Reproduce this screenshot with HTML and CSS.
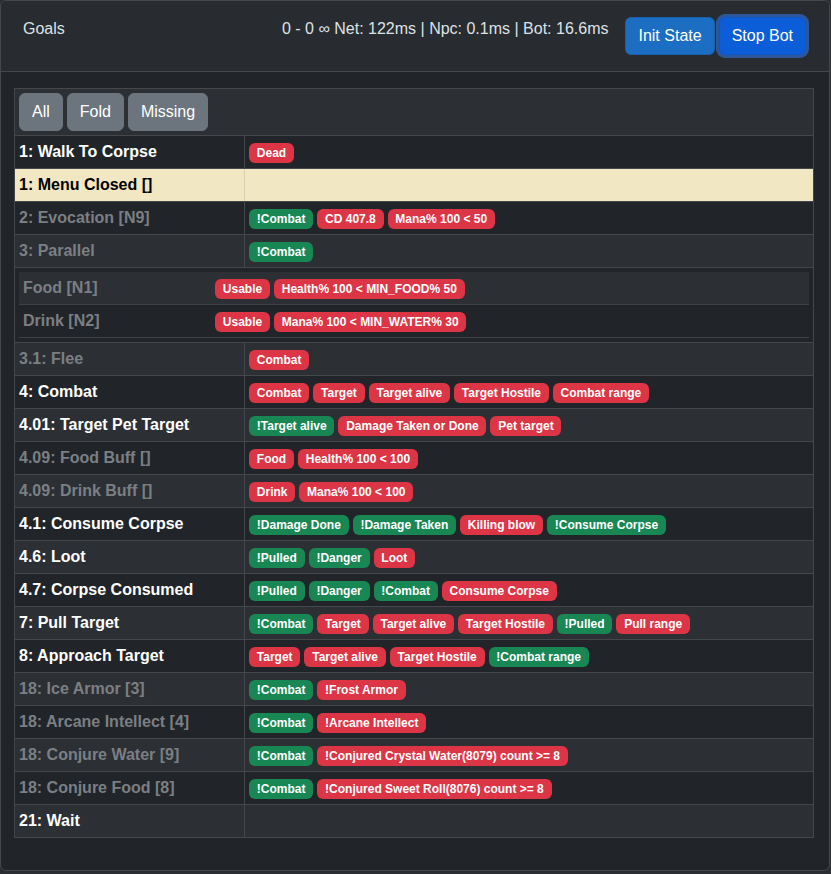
FILE: index.html
```html
<!DOCTYPE html>
<html>
<head>
<meta charset="utf-8">
<title>Goals</title>
<link rel="stylesheet" href="styles.css">
</head>
<body>
<div class="card">
  <div class="card-header">
    <div class="title">Goals</div>
    <div class="header-right">
      <span class="stats">0 - 0 ∞ Net: 122ms | Npc: 0.1ms | Bot: 16.6ms</span>
      <button class="btn btn-init">Init State</button>
      <button class="btn btn-stop">Stop Bot</button>
    </div>
  </div>
  <div class="card-body">
    <table class="goals">
      <colgroup><col class="col-name"><col></colgroup>
      <tbody>
        <tr><td colspan="2"><div class="filters"><button class="btn btn-sec">All</button><button class="btn btn-sec">Fold</button><button class="btn btn-sec">Missing</button></div></td></tr>
        <tr><td class="name">1: Walk To Corpse</td><td><span class="badge red">Dead</span></td></tr>
        <tr class="warn"><td class="name">1: Menu Closed []</td><td></td></tr>
        <tr><td class="name muted">2: Evocation [N9]</td><td><span class="badge green">!Combat</span><span class="badge red">CD 407.8</span><span class="badge red">Mana% 100 &lt; 50</span></td></tr>
        <tr><td class="name muted">3: Parallel</td><td><span class="badge green">!Combat</span></td></tr>
        <tr><td colspan="2">
          <table class="nested">
            <colgroup><col class="col-sub"><col></colgroup>
            <tbody>
              <tr><td class="name muted">Food [N1]</td><td><span class="badge red">Usable</span><span class="badge red">Health% 100 &lt; MIN_FOOD% 50</span></td></tr>
              <tr><td class="name muted">Drink [N2]</td><td><span class="badge red">Usable</span><span class="badge red">Mana% 100 &lt; MIN_WATER% 30</span></td></tr>
            </tbody>
          </table>
        </td></tr>
        <tr><td class="name muted">3.1: Flee</td><td><span class="badge red">Combat</span></td></tr>
        <tr><td class="name">4: Combat</td><td><span class="badge red">Combat</span><span class="badge red">Target</span><span class="badge red">Target alive</span><span class="badge red">Target Hostile</span><span class="badge red">Combat range</span></td></tr>
        <tr><td class="name">4.01: Target Pet Target</td><td><span class="badge green">!Target alive</span><span class="badge red">Damage Taken or Done</span><span class="badge red">Pet target</span></td></tr>
        <tr><td class="name muted">4.09: Food Buff []</td><td><span class="badge red">Food</span><span class="badge red">Health% 100 &lt; 100</span></td></tr>
        <tr><td class="name muted">4.09: Drink Buff []</td><td><span class="badge red">Drink</span><span class="badge red">Mana% 100 &lt; 100</span></td></tr>
        <tr><td class="name">4.1: Consume Corpse</td><td><span class="badge green">!Damage Done</span><span class="badge green">!Damage Taken</span><span class="badge red">Killing blow</span><span class="badge green">!Consume Corpse</span></td></tr>
        <tr><td class="name">4.6: Loot</td><td><span class="badge green">!Pulled</span><span class="badge green">!Danger</span><span class="badge red">Loot</span></td></tr>
        <tr><td class="name">4.7: Corpse Consumed</td><td><span class="badge green">!Pulled</span><span class="badge green">!Danger</span><span class="badge green">!Combat</span><span class="badge red">Consume Corpse</span></td></tr>
        <tr><td class="name">7: Pull Target</td><td><span class="badge green">!Combat</span><span class="badge red">Target</span><span class="badge red">Target alive</span><span class="badge red">Target Hostile</span><span class="badge green">!Pulled</span><span class="badge red">Pull range</span></td></tr>
        <tr><td class="name">8: Approach Target</td><td><span class="badge red">Target</span><span class="badge red">Target alive</span><span class="badge red">Target Hostile</span><span class="badge green">!Combat range</span></td></tr>
        <tr><td class="name muted">18: Ice Armor [3]</td><td><span class="badge green">!Combat</span><span class="badge red">!Frost Armor</span></td></tr>
        <tr><td class="name muted">18: Arcane Intellect [4]</td><td><span class="badge green">!Combat</span><span class="badge red">!Arcane Intellect</span></td></tr>
        <tr><td class="name muted">18: Conjure Water [9]</td><td><span class="badge green">!Combat</span><span class="badge red">!Conjured Crystal Water(8079) count &gt;= 8</span></td></tr>
        <tr><td class="name muted">18: Conjure Food [8]</td><td><span class="badge green">!Combat</span><span class="badge red">!Conjured Sweet Roll(8076) count &gt;= 8</span></td></tr>
        <tr><td class="name">21: Wait</td><td></td></tr>
      </tbody>
    </table>
  </div>
</div>
</body>
</html>
```
FILE: styles.css
```css
* { box-sizing: border-box; }
html, body { margin: 0; padding: 0; }
body {
  background: #2b2e32;
  color: #dee2e6;
  font-family: "Liberation Sans", Arial, sans-serif;
  font-size: 16px;
  line-height: 1.5;
}
.card {
  width: 830px;
  background: #212529;
  border: 1px solid #44474c;
  border-radius: 6px;
}
.card-header {
  display: flex;
  justify-content: space-between;
  align-items: flex-start;
  padding: 16px 23px 16px 22px;
  background: #282b30;
  border-bottom: 1px solid #44474c;
  border-radius: 6px 6px 0 0;
}
.header-right { display: flex; align-items: flex-start; }
.stats { margin-right: 17px; }
.btn {
  font-family: inherit;
  font-size: 16px;
  line-height: 24px;
  padding: 6px 12px;
  border: 1px solid transparent;
  border-radius: 6px;
  color: #fff;
  cursor: pointer;
}
.btn-init { background: #1b6ec2; border-color: #1861ac; margin-right: 4px; }
.btn-stop { background: #0b5ed7; border-color: #0a58ca; box-shadow: 0 0 0 3px rgba(49,132,253,.5); }
.btn-sec { background: #6c757d; border-color: #6c757d; }
.card-body { padding: 16px 15px 16px 13px; }
.filters { display: flex; gap: 4px; }
table { border-collapse: collapse; width: 100%; table-layout: fixed; }
.goals { margin-bottom: 16px; }
.goals > colgroup > .col-name { width: 230px; }
.goals > tbody > tr > td {
  border: 1px solid #44484d;
  padding: 4px;
  vertical-align: top;
  background: #212529;
}
.goals > tbody > tr:nth-child(odd) > td { background: #2c3034; }
.goals > tbody > tr.warn > td { background: #f2e7c3; color: #000; border-color: #d8cfb2; border-top-color: #44484d; border-bottom-color: #44484d; }
.goals > tbody > tr.warn > td:first-child { border-left-color: #44484d; }
.goals > tbody > tr.warn > td:last-child { border-right-color: #44484d; }
.name { font-weight: 700; color: #fff; white-space: nowrap; overflow: hidden; }
.warn .name { color: #000; }
.name.muted { color: #7b7f84; }
.nested > colgroup > .col-sub { width: 192px; }
.nested > tbody > tr > td {
  padding: 4px;
  border-bottom: 1px solid #3e4247;
  vertical-align: top;
  background: #212529;
}
.nested > tbody > tr:nth-child(odd) > td { background: #2c3034; }
.badge {
  display: inline-block;
  font-size: 12px;
  font-weight: 700;
  line-height: 1;
  padding: 4.2px 7.8px;
  border-radius: 6px;
  color: #fff;
  white-space: nowrap;
  margin-right: 4px;
}
.red { background: #dc3545; }
.green { background: #198754; }
```
